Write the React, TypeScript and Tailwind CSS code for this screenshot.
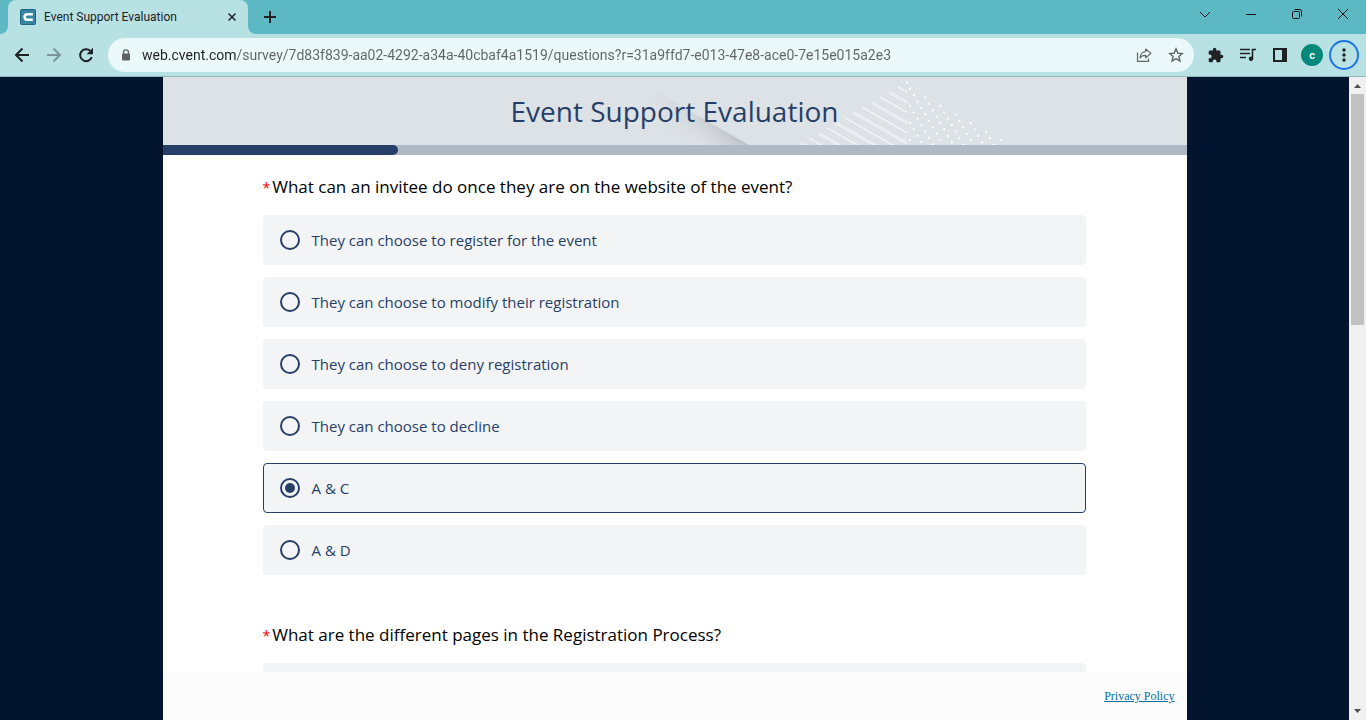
import { useState, type ReactNode } from "react";

const NAV = "flex h-7 w-7 items-center justify-center rounded-full";
const ACTION = "flex h-[30px] w-[30px] items-center justify-center rounded-full";

function TabStrip() {
  return (
    <div className="flex h-[34px] shrink-0 items-stretch bg-[#5cb8c2] pl-2 text-[#202124]">
      <div className="relative flex w-60 items-center gap-2 rounded-t-lg bg-[#b8e1e4] pl-3 pr-2">
        <svg className="absolute bottom-0 -left-2 h-2 w-2" viewBox="0 0 8 8" aria-hidden="true">
          <path d="M8 0v8H0a8 8 0 0 0 8-8z" fill="#b8e1e4" />
        </svg>
        <svg className="absolute bottom-0 -right-2 h-2 w-2" viewBox="0 0 8 8" aria-hidden="true">
          <path d="M0 0v8h8a8 8 0 0 1-8-8z" fill="#b8e1e4" />
        </svg>
        <svg className="h-4 w-4 shrink-0" viewBox="0 0 16 16" aria-hidden="true">
          <rect x=".5" y=".5" width="15" height="15" rx="1" fill="#3785a3" stroke="#1f6480" />
          <path d="M12.8 5.2H7.400a2.800 2.800 0 0 0 0 5.600h5.400" fill="none" stroke="#fff" strokeWidth="2.600" />
        </svg>
        <span className="flex-1 whitespace-nowrap text-xs">Event Support Evaluation</span>
        <button type="button" aria-label="Close tab" className="flex h-4 w-4 items-center justify-center">
          <svg className="h-2 w-2" viewBox="0 0 8 8" stroke="currentColor" strokeWidth="1.5" aria-hidden="true">
            <path d="M.5.5l7 7M7.5.5l-7 7" />
          </svg>
        </button>
      </div>
      <button type="button" aria-label="New tab" className="ml-2 flex w-7 items-center justify-center">
        <svg className="h-3 w-3" viewBox="0 0 12 12" stroke="currentColor" strokeWidth="2" aria-hidden="true">
          <path d="M6 0v12M0 6h12" />
        </svg>
      </button>
      <div className="ml-auto flex pb-[6px]">
        <WindowButton label="Search tabs">
          <path d="M1 4l5 5 5-5" />
        </WindowButton>
        <WindowButton label="Minimize">
          <path d="M1 6.5h10" />
        </WindowButton>
        <WindowButton label="Restore">
          <rect x="1.5" y="3.5" width="7" height="7" rx="1" />
          <path d="M3.5 1.5h5a2 2 0 0 1 2 2v5" />
        </WindowButton>
        <WindowButton label="Close">
          <path d="M1 1l10 10M11 1L1 11" />
        </WindowButton>
      </div>
    </div>
  );
}

function WindowButton({ label, children }: { label: string; children: ReactNode }) {
  return (
    <button type="button" aria-label={label} className="flex w-[46px] items-center justify-center">
      <svg className="h-3 w-3" viewBox="0 0 12 12" fill="none" stroke="#111" strokeWidth="1" aria-hidden="true">
        {children}
      </svg>
    </button>
  );
}

function Toolbar() {
  return (
    <div className="flex h-[43px] shrink-0 items-center border-b border-[#8fb6b9] bg-[#b8e1e4] pl-2 pr-[7px] text-[#202124]">
      <div className="flex gap-1">
        <button type="button" aria-label="Back" className={NAV}>
          <svg className="h-4 w-4" viewBox="0 0 16 16" fill="none" stroke="currentColor" strokeWidth="2" aria-hidden="true">
            <path d="M15 8H2.5M8.5 1.5L2 8l6.5 6.5" />
          </svg>
        </button>
        <button type="button" aria-label="Forward" className={NAV}>
          <svg className="h-4 w-4" viewBox="0 0 16 16" fill="none" stroke="#7b9698" strokeWidth="2" aria-hidden="true">
            <path d="M1 8h12.5M7.5 1.5L14 8l-6.5 6.5" />
          </svg>
        </button>
        <button type="button" aria-label="Reload" className={NAV}>
          <svg className="h-4 w-4" viewBox="0 0 16 16" aria-hidden="true">
            <path d="M13.8 10.2A6 6 0 1 1 12.3 3.8" fill="none" stroke="currentColor" strokeWidth="2" />
            <path d="M15 .8v6.4H8.6z" fill="currentColor" />
          </svg>
        </button>
      </div>
      <div className="ml-2 flex h-[34px] min-w-0 flex-1 items-center rounded-full bg-[#ebf8f9] pl-3 pr-0.5 text-[#5f6368]">
        <svg className="h-3 w-3 shrink-0" viewBox="0 0 12 12" aria-hidden="true">
          <path d="M3.5 5V3.4a2.5 2.5 0 0 1 5 0V5" fill="none" stroke="#5f6368" strokeWidth="1.3" />
          <rect x="2" y="4.6" width="8" height="7" rx="1" fill="#5f6368" />
        </svg>
        <input
          aria-label="Address"
          defaultValue="web.cvent.com/survey/7d83f839-aa02-4292-a34a-40cbaf4a1519/questions?r=31a9ffd7-e013-47e8-ace0-7e15e015a2e3"
          className="ml-[10px] min-w-0 flex-1 bg-[linear-gradient(to_right,#202124_95px,#5f6368_95px)] bg-clip-text text-sm text-transparent outline-none"
        />
        <button type="button" aria-label="Share this page" className="flex h-8 w-8 items-center justify-center">
          <svg className="h-4 w-4" viewBox="0 0 16 16" fill="none" stroke="#5f6368" strokeWidth="1.2" aria-hidden="true">
            <path d="M1.5 5.5v8.9h11v-3" />
            <path d="M9.7 2l5.2 4.4-5.2 4.4V8.3C7 8.2 5.2 9 4 11c.3-3.4 2.3-6 5.7-6.5z" strokeLinejoin="round" />
          </svg>
        </button>
        <button type="button" aria-label="Bookmark this tab" className="flex h-8 w-8 items-center justify-center">
          <svg className="h-4 w-4" viewBox="0 0 16 16" fill="none" stroke="#5f6368" strokeWidth="1.4" aria-hidden="true">
            <path d="M8 1.8l1.8 4.3 4.6.4-3.5 3 1.05 4.5L8 11.6 4.05 14l1.05-4.5-3.5-3 4.6-.4z" />
          </svg>
        </button>
      </div>
      <div className="ml-[7px] flex items-center gap-0.5">
        <button type="button" aria-label="Extensions" className={ACTION}>
          <svg className="h-4 w-4" viewBox="1 0 23 23" fill="currentColor" aria-hidden="true">
            <path d="M20.5 11H19V7c0-1.1-.9-2-2-2h-4V3.5a2.5 2.5 0 0 0-5 0V5H4c-1.1 0-1.99.9-1.99 2v3.8H3.5c1.49 0 2.7 1.21 2.7 2.7s-1.21 2.7-2.7 2.7H2V20c0 1.1.9 2 2 2h3.8v-1.5c0-1.49 1.21-2.7 2.7-2.7s2.7 1.21 2.7 2.7V22H17c1.1 0 2-.9 2-2v-4h1.5a2.5 2.5 0 0 0 0-5z" />
          </svg>
        </button>
        <button type="button" aria-label="Media controls" className={ACTION}>
          <svg className="h-4 w-4" viewBox="0 0 16 16" fill="none" stroke="currentColor" strokeWidth="1.6" aria-hidden="true">
            <path d="M0 2.5h10M0 6.5h10M0 10.5h6M16 2.5h-3.5v9" />
            <circle cx="11" cy="11.7" r="2.2" fill="currentColor" stroke="none" />
          </svg>
        </button>
        <button type="button" aria-label="Side panel" className={ACTION}>
          <svg className="h-[14px] w-[14px]" viewBox="0 0 14 14" aria-hidden="true">
            <rect x="1" y="1" width="12" height="12" fill="none" stroke="currentColor" strokeWidth="2" />
            <path d="M9 1h4v12H9z" fill="currentColor" />
          </svg>
        </button>
        <button type="button" aria-label="Profile" className={ACTION}>
          <span className="flex h-[22px] w-[22px] items-center justify-center rounded-full bg-[#00897b] text-[11px] font-semibold leading-none text-white">
            c
          </span>
        </button>
        <button type="button" aria-label="Menu" className="flex h-[30px] w-[30px] items-center justify-center rounded-full border-2 border-[#1a73e8]">
          <svg className="h-[14px] w-1" viewBox="0 0 4 14" fill="currentColor" aria-hidden="true">
            <circle cx="2" cy="2" r="1.7" />
            <circle cx="2" cy="7" r="1.7" />
            <circle cx="2" cy="12" r="1.7" />
          </svg>
        </button>
      </div>
    </div>
  );
}

const DOTS: [number, number][] = [[744, 5.7]];
for (let a = -6; a < 9; a++) {
  for (let b = 0; b < 20; b++) {
    const x = 747 + 15.2 * a + 3.8 * b;
    const y = 11.7 + 8.6 * a + 6.43 * b;
    if (x > 746 && y >= 11 + (x - 747) * 0.566 && y < 70) DOTS.push([x, y]);
  }
}

function HeaderArt() {
  return (
    <svg className="absolute inset-0 h-full w-full" viewBox="0 0 1024 68" preserveAspectRatio="xMidYMid slice" aria-hidden="true">
      <defs>
        <linearGradient id="shade" gradientUnits="userSpaceOnUse" x1="563" y1="50" x2="545" y2="81">
          <stop offset="0" stopColor="#9a9ea6" stopOpacity=".6" />
          <stop offset="1" stopColor="#c8ccd1" stopOpacity="0" />
        </linearGradient>
        <linearGradient id="fade" gradientUnits="userSpaceOnUse" x1="488" y1="0" x2="586" y2="0">
          <stop offset="0" stopColor="#000" />
          <stop offset="1" stopColor="#fff" />
        </linearGradient>
        <mask id="fadeMask">
          <rect width="1024" height="68" fill="url(#fade)" />
        </mask>
        <clipPath id="stripes">
          <rect x="600" y="0" width="144.7" height="68" />
        </clipPath>
      </defs>
      <path d="M488 12l98 56h-98z" fill="url(#shade)" mask="url(#fadeMask)" />
      <g clipPath="url(#stripes)">
        {[0, 1, 2, 3, 4, 5, 6].map((k) => (
          <g key={k}>
            <path d={`M${734.7 - 17.75 * k} ${9.7 + 10.25 * k}l180 103`} stroke="#fff" strokeWidth="1" />
            <path d={`M${726.5 - 17.75 * k} ${15.3 + 10.25 * k}l180 103`} stroke="#ecedf0" strokeWidth="3.2" />
          </g>
        ))}
      </g>
      {DOTS.map(([x, y], i) => (
        <circle key={i} cx={x} cy={y} r="1.1" fill="#fff" />
      ))}
    </svg>
  );
}

function Question({ id, title, options, initial }: { id: string; title: string; options: string[]; initial?: string }) {
  const [value, setValue] = useState(initial);
  return (
    <fieldset className="mb-12">
      <legend className="mb-4 text-[17px] leading-6 text-black">
        <span className="mr-0.5 text-sm text-[#f00000]">*</span>
        {title}
      </legend>
      <div className="flex flex-col gap-3">
        {options.map((o) => (
          <label
            key={o}
            className="flex h-[50px] items-center gap-3 rounded-[4px] border border-[#f3f4f6] bg-[#f3f4f6] px-4 text-[15px] text-[#273f68] has-checked:border-[#273f68]"
          >
            <input
              type="radio"
              name={id}
              checked={value === o}
              onChange={() => setValue(o)}
              className="h-5 w-5 shrink-0 appearance-none rounded-full border-2 border-[#273f68] bg-clip-content p-[3px] checked:bg-[#273f68]"
            />
            {o}
          </label>
        ))}
      </div>
    </fieldset>
  );
}

function Scrollbar() {
  return (
    <div className="flex w-[17px] shrink-0 flex-col items-center bg-[#f1f1f1]" aria-hidden="true">
      <svg className="h-[17px] w-[17px] shrink-0" viewBox="0 0 17 17" fill="#505050">
        <path d="M5 11h7L8.5 7z" />
      </svg>
      <div className="min-h-0 w-[13px] flex-1">
        <div className="h-[38%] bg-[#c1c1c1]" />
      </div>
      <svg className="h-[17px] w-[17px] shrink-0" viewBox="0 0 17 17" fill="#505050">
        <path d="M5 6h7l-3.5 4z" />
      </svg>
    </div>
  );
}

export default function App() {
  return (
    <div className="flex h-screen flex-col overflow-hidden font-['Roboto','Noto_Sans',sans-serif]">
      <TabStrip />
      <Toolbar />
      <div className="flex min-h-0 flex-1 bg-[#02142e]">
        <div className="flex min-w-0 flex-1 justify-center font-['Open_Sans','Noto_Sans',sans-serif]">
          <main className="flex w-full max-w-5xl flex-col bg-white">
            <header className="relative flex h-[68px] shrink-0 items-center justify-center bg-[#dde2e6]">
              <HeaderArt />
              <h1 className="relative text-[28px] text-[#273f68]">Event Support Evaluation</h1>
            </header>
            <div className="h-[10px] shrink-0 bg-[#afb9c6]" role="progressbar" aria-label="Survey progress" aria-valuenow={23}>
              <div className="h-full w-[23%] rounded-r-full bg-[#273f68]" />
            </div>
            <form className="min-h-0 flex-1 overflow-hidden pl-[100px] pr-[101px] pt-5">
              <Question
                id="invitee"
                title="What can an invitee do once they are on the website of the event?"
                initial="A & C"
                options={[
                  "They can choose to register for the event",
                  "They can choose to modify their registration",
                  "They can choose to deny registration",
                  "They can choose to decline",
                  "A & C",
                  "A & D",
                ]}
              />
              <Question id="pages" title="What are the different pages in the Registration Process?" options={[""]} />
            </form>
            <footer className="flex h-12 shrink-0 items-center justify-end bg-[#fcfcfc] px-3">
              <a href="#privacy" className="font-['Liberation_Serif',serif] text-xs text-[#006f9f] underline">
                Privacy Policy
              </a>
            </footer>
          </main>
        </div>
        <Scrollbar />
      </div>
    </div>
  );
}
